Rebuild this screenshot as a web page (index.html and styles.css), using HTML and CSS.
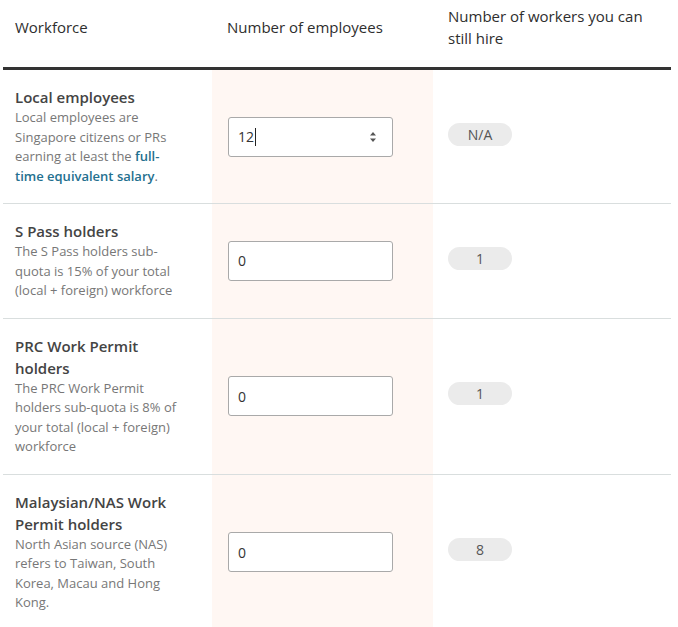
FILE: index.html
```html
<!DOCTYPE html>
<html>
<head>
	<title>Workforce quota</title>
	<link rel="stylesheet" href="styles.css">
</head>
<body>
	<div class="quota">
		<div class="head">
			<div class="hcell first">Workforce</div>
			<div class="hcell mid">Number of employees</div>
			<div class="hcell last">Number of workers you can still hire</div>
		</div>

		<div class="row">
			<div class="cell first">
				<div class="title">Local employees</div>
				<div class="desc">Local employees are Singapore citizens or PRs earning at least the <a href="">full-time equivalent salary</a>.</div>
			</div>
			<div class="cell mid">
				<div class="field focus"><span>12</span><span class="caret"></span>
					<svg class="spin" width="8" height="12" viewBox="0 0 8 12"><path d="M4 1 L7 4.5 L1 4.5 Z M4 11 L7 7.5 L1 7.5 Z" fill="#555"/></svg>
				</div>
			</div>
			<div class="cell last"><span class="badge">N/A</span></div>
		</div>

		<div class="row">
			<div class="cell first">
				<div class="title">S Pass holders</div>
				<div class="desc">The S Pass holders sub-quota is 15% of your total (local + foreign) workforce</div>
			</div>
			<div class="cell mid">
				<div class="field"><span>0</span></div>
			</div>
			<div class="cell last"><span class="badge">1</span></div>
		</div>

		<div class="row">
			<div class="cell first">
				<div class="title">PRC Work Permit holders</div>
				<div class="desc">The PRC Work Permit holders sub-quota is 8% of your total (local + foreign) workforce</div>
			</div>
			<div class="cell mid">
				<div class="field"><span>0</span></div>
			</div>
			<div class="cell last"><span class="badge">1</span></div>
		</div>

		<div class="row">
			<div class="cell first">
				<div class="title">Malaysian/NAS Work Permit holders</div>
				<div class="desc">North Asian source (NAS) refers to Taiwan, South Korea, Macau and Hong Kong.</div>
			</div>
			<div class="cell mid">
				<div class="field"><span>0</span></div>
			</div>
			<div class="cell last"><span class="badge">8</span></div>
		</div>
	</div>
</body>
</html>
```

FILE: styles.css
```css
*{
	margin: 0px;
	padding: 0px;
	box-sizing: border-box;
}
body{
	font-family: "Open Sans", "Liberation Sans", sans-serif;
	color: #333;
	background-color: #fff;
}
.quota{
	margin-left: 3px;
	width: 668px;
}
.head, .row{
	display: grid;
	grid-template-columns: 209px 221px 1fr;
}
.head{
	height: 70px;
	padding: 5px 0 21px;
	border-bottom: 3px solid #333;
	align-items: center;
	font-size: 15px;
	line-height: 22px;
	color: #2e2e2e;
}
.hcell.first{
	padding-left: 12px;
}
.hcell.mid{
	padding-left: 15px;
}
.hcell.last{
	padding-left: 15px;
	padding-right: 20px;
}
.row{
	border-bottom: 1px solid #d9dede;
}
.cell{
	display: flex;
	align-items: center;
}
.cell.first{
	display: block;
	padding: 16px 27px 17px 12px;
}
.cell.mid{
	background-color: #fff7f3;
	padding-left: 16px;
}
.cell.last{
	padding-left: 15px;
	padding-bottom: 5px;
}
.title{
	font-size: 15px;
	font-weight: 600;
	line-height: 22px;
	color: #444;
}
.desc{
	font-size: 13px;
	line-height: 19.5px;
	color: #777;
}
.desc a{
	color: #24708f;
	font-weight: 600;
	text-decoration: none;
}
.field{
	width: 165px;
	height: 40px;
	display: flex;
	align-items: center;
	padding: 0 9px;
	background-color: #fff;
	border: 1px solid #a9a9a9;
	border-radius: 3px;
	font-size: 14px;
	color: #333;
}
.caret{
	width: 1px;
	height: 18px;
	background-color: #222;
	margin-left: 1px;
}
.spin{
	margin-left: auto;
	margin-right: 6px;
}
.badge{
	display: inline-block;
	width: 64px;
	height: 23px;
	line-height: 23px;
	text-align: center;
	background-color: #ebebeb;
	border-radius: 12px;
	font-size: 14px;
	color: #555;
}
```
